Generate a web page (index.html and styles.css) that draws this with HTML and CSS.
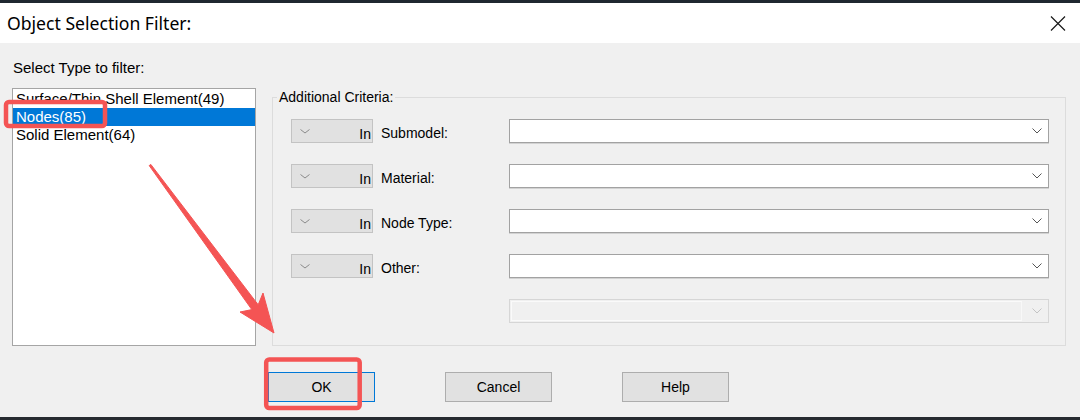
FILE: index.html
```html
<!DOCTYPE html>
<html lang="en">
<head>
  <meta charset="UTF-8" />
  <meta name="viewport" content="width=device-width, initial-scale=1.0"/>
  <title>Object Selection Filter</title>
  <link rel="stylesheet" href="styles.css">
</head>
<body>

  <div class="window">
    <div class="edge"></div>

    <header class="titlebar">
      <h1 class="title">Object Selection Filter:</h1>
      <button class="close" aria-label="Close">
        <svg width="16" height="15" viewBox="0 0 16 15"><path d="M1 0.5 L15 14.5 M15 0.5 L1 14.5" stroke="#1a1a1a" stroke-width="1.2" fill="none"/></svg>
      </button>
    </header>

    <main class="content">
      <section class="type-pane">
        <p class="pane-label">Select Type to filter:</p>
        <ul class="type-list">
          <li>Surface/Thin Shell Element(49)</li>
          <li class="selected">Nodes(85)</li>
          <li>Solid Element(64)</li>
        </ul>
      </section>

      <fieldset class="criteria">
        <legend>Additional Criteria:</legend>
        <div class="criteria-grid">
          <div class="op"><svg class="chev small" width="10" height="5" viewBox="0 0 10 5"><path d="M0.5 0.5 L5 4 L9.5 0.5" /></svg><span>In</span></div>
          <label class="field-label">Submodel:</label>
          <div class="combo"><svg class="chev" width="10" height="6" viewBox="0 0 10 6"><path d="M0.5 0.5 L5 5 L9.5 0.5" /></svg></div>

          <div class="op"><svg class="chev small" width="10" height="5" viewBox="0 0 10 5"><path d="M0.5 0.5 L5 4 L9.5 0.5" /></svg><span>In</span></div>
          <label class="field-label">Material:</label>
          <div class="combo"><svg class="chev" width="10" height="6" viewBox="0 0 10 6"><path d="M0.5 0.5 L5 5 L9.5 0.5" /></svg></div>

          <div class="op"><svg class="chev small" width="10" height="5" viewBox="0 0 10 5"><path d="M0.5 0.5 L5 4 L9.5 0.5" /></svg><span>In</span></div>
          <label class="field-label">Node Type:</label>
          <div class="combo"><svg class="chev" width="10" height="6" viewBox="0 0 10 6"><path d="M0.5 0.5 L5 5 L9.5 0.5" /></svg></div>

          <div class="op"><svg class="chev small" width="10" height="5" viewBox="0 0 10 5"><path d="M0.5 0.5 L5 4 L9.5 0.5" /></svg><span>In</span></div>
          <label class="field-label">Other:</label>
          <div class="combo"><svg class="chev" width="10" height="6" viewBox="0 0 10 6"><path d="M0.5 0.5 L5 5 L9.5 0.5" /></svg></div>

          <div class="combo disabled">
            <div class="combo-field"></div>
            <svg class="chev" width="10" height="6" viewBox="0 0 10 6"><path d="M0.5 0.5 L5 5 L9.5 0.5" /></svg>
          </div>
        </div>
      </fieldset>
    </main>

    <footer class="actions">
      <button class="btn default">OK</button>
      <button class="btn">Cancel</button>
      <button class="btn">Help</button>
    </footer>

    <div class="edge bottom"></div>

    <!-- red callouts drawn on top of the dialog -->
    <svg class="marks" width="1080" height="420" viewBox="0 0 1080 420">
      <rect x="6" y="102" width="99" height="24" rx="3" />
      <rect x="266.2" y="359.5" width="93.5" height="48.5" rx="3" />
      <polygon class="arrow" points="149.2,165.6 251.8,309.6 240,312 274,333 263,293 258.2,304.8 150.8,164.4" />
    </svg>
  </div>

</body>
</html>
```

FILE: styles.css
```css
* {
  box-sizing: border-box;
}

body {
  margin: 0;
  background: #f0f0f0;
  font-family: "Liberation Sans", Arial, sans-serif;
  color: #000;
}

.window {
  position: relative;
  width: 1080px;
  height: 420px;
  display: flex;
  flex-direction: column;
  background: #f0f0f0;
  overflow: hidden;
}

.edge {
  height: 3px;
  flex: none;
  background: #1f2830;
}

.edge.bottom {
  background: #262b30;
}

.titlebar {
  height: 40px;
  flex: none;
  background: #fff;
  display: flex;
  align-items: center;
  justify-content: space-between;
  padding: 0 14px 0 7px;
}

.title {
  margin: 0;
  font-family: "Noto Sans", "Open Sans", sans-serif;
  font-size: 17.6px;
  font-weight: normal;
  color: #000;
}

.close {
  border: none;
  background: none;
  padding: 0;
  width: 16px;
  height: 15px;
  display: flex;
}

.content {
  display: flex;
  gap: 16px;
  padding: 16px 14px 0 12px;
  flex: none;
}

.type-pane {
  width: 244px;
  flex: none;
}

.pane-label {
  margin: 0 0 11px 1px;
  font-size: 15px;
  line-height: 18px;
}

.type-list {
  list-style: none;
  margin: 0;
  padding: 1px 0 0;
  height: 258px;
  background: #fff;
  border: 1px solid #a5a5a5;
  font-size: 15px;
}

.type-list li {
  height: 18px;
  line-height: 18px;
  padding-left: 3px;
  white-space: nowrap;
}

.type-list li.selected {
  background: #0078d7;
  color: #fff;
}

.criteria {
  flex: 1;
  margin: 30px 0 0;
  padding: 0;
  height: 257px;
  min-width: 0;
  border: 1px solid #dcdcdc;
}

.criteria legend {
  margin-left: 4px;
  padding: 0 2px;
  font-size: 14px;
  line-height: 16px;
}

.criteria-grid {
  display: grid;
  grid-template-columns: 82px 120px 1fr;
  grid-auto-rows: 24px;
  column-gap: 8px;
  row-gap: 21px;
  margin: 14px 16px 0 18px;
}

/* "In" operator dropdown: chevron on the left, clipped text on the right */
.op {
  display: flex;
  align-items: center;
  justify-content: space-between;
  padding: 1px 1px 0 8px;
  background: #e1e1e1;
  border: 1px solid #c3c3c3;
  font-size: 14px;
  overflow: hidden;
}

.op span {
  align-self: flex-end;
  line-height: 15px;
}

.op .chev {
  stroke: #8a8a8a;
}

.chev {
  display: block;
  fill: none;
  stroke-width: 1;
  flex: none;
}

.field-label {
  align-self: end;
  font-size: 14px;
  line-height: 17px;
  padding-bottom: 1px;
  white-space: nowrap;
}

.combo {
  display: flex;
  align-items: center;
  justify-content: flex-end;
  padding-right: 6px;
  background: #fff;
  border: 1px solid #a2a2a2;
  box-shadow: 0 1px 0 #d2d2d2;
}

.combo .chev {
  stroke: #555;
}

.combo.disabled {
  grid-column: 3;
  background: #f0f0f0;
  border-color: #d6d6d6;
  box-shadow: none;
  padding: 1px 6px 1px 1px;
  gap: 10px;
}

.combo-field {
  flex: 1;
  align-self: stretch;
  border: 1px solid #fafafa;
  border-right-color: #f8f8f8;
}

.combo.disabled .chev {
  stroke: #c4c4c4;
}

.actions {
  flex: 1;
  display: flex;
  gap: 70px;
  padding: 26px 0 0 268px;
}

.btn {
  width: 107px;
  height: 30px;
  background: #e1e1e1;
  border: 1px solid #adadad;
  font-family: inherit;
  font-size: 14px;
  color: #000;
  padding: 0;
}

.btn.default {
  border-color: #0078d7;
}

.marks {
  position: absolute;
  top: 0;
  left: 0;
  pointer-events: none;
}

.marks rect {
  fill: none;
  stroke: #f45454;
  stroke-width: 4.5;
}

.marks .arrow {
  fill: #f45454;
  stroke: #f45454;
  stroke-width: 1;
  stroke-linejoin: round;
}
```
